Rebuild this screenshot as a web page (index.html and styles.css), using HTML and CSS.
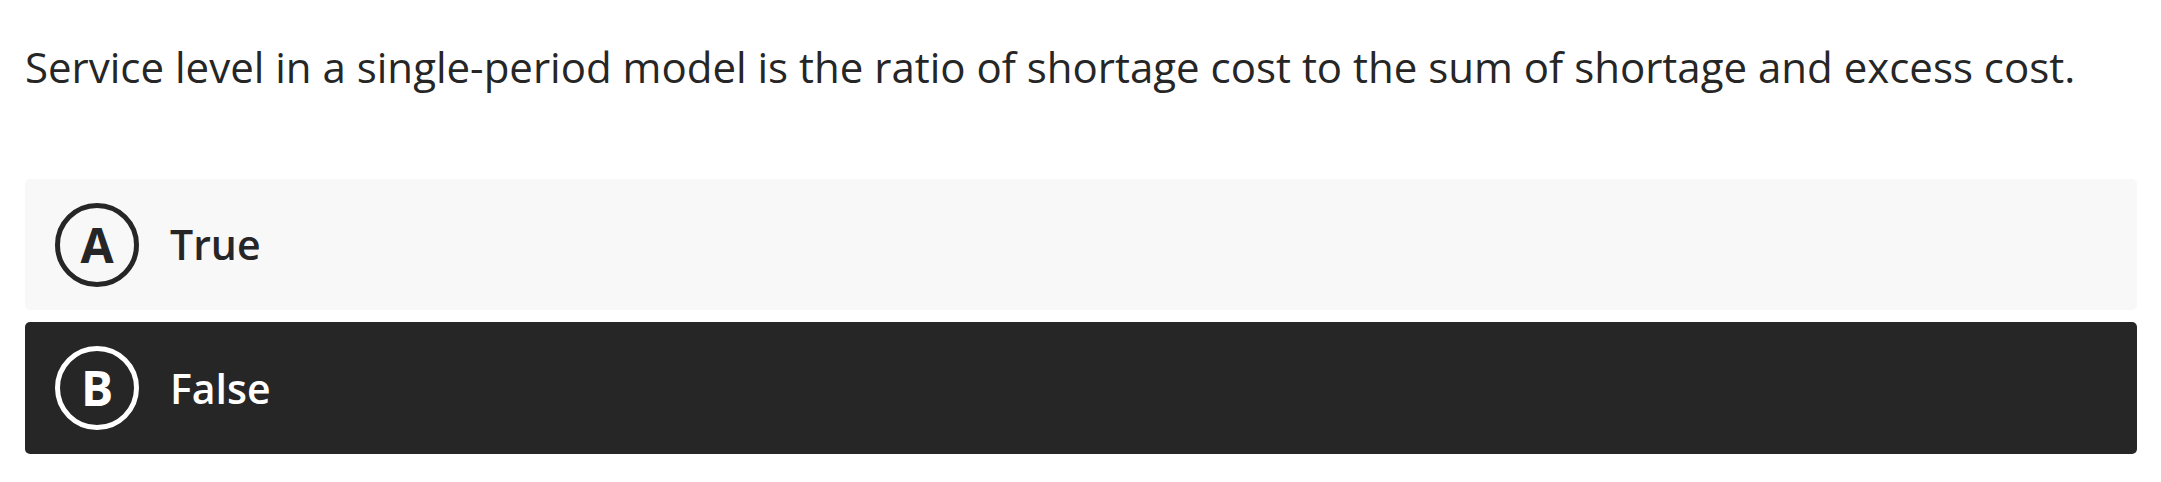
FILE: index.html
```html
<!DOCTYPE html>
<html lang="en">
<head>
<meta charset="utf-8">
<title>Question</title>
<link rel="stylesheet" href="styles.css">
</head>
<body>
<main class="page">
  <p class="question">Service level in a single-period model is the ratio of shortage cost to the sum of shortage and excess cost.</p>
  <div class="options">
    <div class="option">
      <span class="badge">A</span>
      <span class="label">True</span>
    </div>
    <div class="option selected">
      <span class="badge">B</span>
      <span class="label">False</span>
    </div>
  </div>
</main>
</body>
</html>
```
FILE: styles.css
```css
html, body {
  margin: 0;
  padding: 0;
  background: #ffffff;
}
body {
  font-family: "Open Sans", "Noto Sans", sans-serif;
  color: #262626;
}
.page {
  padding: 37px 24px 0 25px;
}
.question {
  margin: 0 0 82px 0;
  font-size: 42px;
  line-height: 60px;
  font-weight: 400;
  color: #262626;
}
.options {
  display: flex;
  flex-direction: column;
  gap: 12px;
}
.option {
  display: flex;
  align-items: center;
  gap: 31px;
  height: 131px;
  padding: 0 30px;
  background: #f8f8f8;
  border-radius: 5px;
  box-sizing: border-box;
}
.option.selected {
  background: #262626;
  color: #ffffff;
  height: 132px;
}
.badge {
  display: flex;
  align-items: center;
  justify-content: center;
  width: 84px;
  height: 84px;
  box-sizing: border-box;
  border: 5px solid currentColor;
  border-radius: 50%;
  font-size: 48px;
  font-weight: 700;
  line-height: 1;
  flex: none;
}
.label {
  font-size: 41px;
  font-weight: 600;
  line-height: 1;
}
```
